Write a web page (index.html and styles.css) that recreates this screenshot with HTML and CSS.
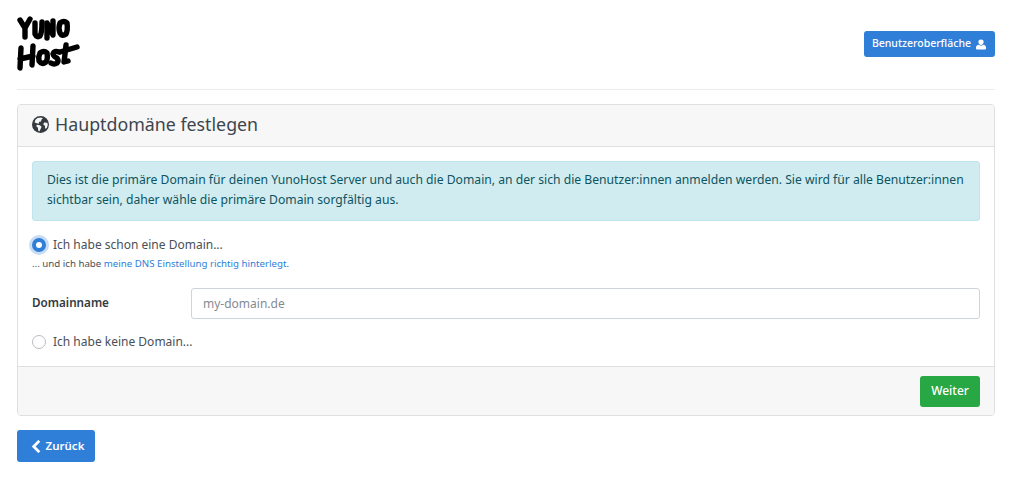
FILE: index.html
```html
<!DOCTYPE html>
<html lang="de">
<head>
<meta charset="utf-8">
<title>Hauptdomäne festlegen</title>
<link rel="stylesheet" href="styles.css">
</head>
<body>
<div class="page">
  <header class="top">
    <svg class="logo" viewBox="0 0 64 56" aria-label="YunoHost">
      <g fill="none" stroke="#000" stroke-width="5.400" stroke-linecap="round" stroke-linejoin="round">
        <path d="M3 5 L8 13 L13 4 M8 13 L8 22"/>
        <path d="M18 8 L18 19 Q20 23 23 21 Q25 18 25 7"/>
        <path d="M30 23 L30 8 L36 20 L36 6"/>
        <path d="M43 8 Q47 5 50 8 Q51 15 49 19 Q45 22 43 18 Q41 13 43 8 Z"/>
        <path d="M4 33 L3 53 M3 44 L16 41 M16 31 L15 50"/>
        <path d="M23 38 Q27 35 30 38 Q31 44 29 47 Q25 50 22 46 Q21 42 23 38 Z"/>
        <path d="M42 37 Q37 35 36 39 Q37 42 40 43 Q42 46 40 48 Q37 50 34 48"/>
        <path d="M43 37 L60 32 M49 30 Q48 40 47 47 L51 46"/>
      </g>
    </svg>
    <a class="btn btn-sm btn-primary" href="#">Benutzeroberfläche
      <svg class="ico-user" viewBox="0 0 12 12"><path d="M6 0a3.100 3.100 0 0 1 3.100 3.400c0 1.700-1.400 3.200-3.100 3.200S2.900 5.100 2.900 3.400A3.100 3.100 0 0 1 6 0zM3 6.400c1.700 1.300 4.300 1.300 6 0 1.800.2 3 1.600 3 3.300v1c0 .9-.7 1.300-1.400 1.300H1.400C.7 12 0 11.600 0 10.700v-1c0-1.700 1.200-3.100 3-3.300z"/></svg>
    </a>
  </header>

  <section class="card">
    <div class="card-head">
      <svg class="ico-globe" viewBox="0 0 16 16"><circle cx="8" cy="8" r="8" fill="#343a40"/><path fill="#f7f7f7" d="M5.200 1.800 8.400 1.400 10.300 2.400 8.700 3.500 8.600 5.100 6.800 5.400 6.300 7.300 3.700 6.500 2.400 5.800 3.300 3.500zM4.500 8.300 7.400 8.600 9 10.200 8 12.400 6.900 14.700 5.800 13.600 5.600 11 4 9.700zM11.300 6.100 14.400 6.300 14.900 8.500 13.900 11.300 12.200 12.100 12.300 9.500 10.600 8z"/></svg>
      <h2 class="card-title">Hauptdomäne festlegen</h2>
    </div>
    <div class="card-body">
      <div class="alert">Dies ist die primäre Domain für deinen YunoHost Server und auch die Domain, an der sich die Benutzer:innen anmelden werden. Sie wird für alle Benutzer:innen sichtbar sein, daher wähle die primäre Domain sorgfältig aus.</div>
      <label class="radio">
        <span class="dot dot-on"></span>
        <span>Ich habe schon eine Domain...</span>
      </label>
      <p class="hint">... und ich habe <a href="#">meine DNS Einstellung richtig hinterlegt</a>.</p>
      <div class="field">
        <label class="field-label" for="domain">Domainname</label>
        <input class="field-input" id="domain" type="text" placeholder="my-domain.de">
      </div>
      <label class="radio">
        <span class="dot"></span>
        <span>Ich habe keine Domain...</span>
      </label>
    </div>
    <div class="card-foot">
      <a class="btn btn-success" href="#">Weiter</a>
    </div>
  </section>

  <a class="btn btn-primary btn-back" href="#">
    <svg class="ico-chev" viewBox="0 0 10 14"><path d="M7.500 2 2.500 7l5 5" fill="none" stroke="#fff" stroke-width="3" stroke-linecap="square"/></svg>
    Zurück
  </a>
</div>
</body>
</html>
```
FILE: styles.css
```css
* { box-sizing: border-box; }
html, body { margin: 0; padding: 0; background: #fff; }
body {
  font-family: "Noto Sans", "Open Sans", sans-serif;
  font-size: 14px;
  line-height: 1.5;
  color: #343a40;
}
a { text-decoration: none; }
.page {
  width: 1024px;
  padding: 0 29px 0 17px;
  display: flex;
  flex-direction: column;
  align-items: stretch;
}
.top {
  height: 90px;
  border-bottom: 1px solid #ececec;
  display: flex;
  justify-content: space-between;
  align-items: flex-start;
  padding-top: 15px;
  margin-bottom: 14px;
}
.logo { width: 64px; height: 56px; display: block; }
.btn {
  display: inline-flex;
  align-items: center;
  justify-content: center;
  border-radius: 3px;
  color: #fff;
  font-weight: 500;
  white-space: nowrap;
}
.btn-primary { background: #2f7ed8; }
.btn-success { background: #28a745; }
.btn-sm {
  height: 26px;
  margin-top: 16px;
  padding: 0 9px 0 8px;
  font-size: 10.500px;
  gap: 5px;
}
.ico-user { width: 10px; height: 11px; fill: #fff; }
.card {
  border: 1px solid #dfdfdf;
  border-radius: 4px;
  display: flex;
  flex-direction: column;
  height: 312px;
}
.card-head {
  height: 42px;
  background: #f7f7f7;
  border-bottom: 1px solid #dfdfdf;
  display: flex;
  align-items: center;
  gap: 6px;
  padding: 0 0 2px 14px;
  border-radius: 3px 3px 0 0;
}
.ico-globe { width: 17px; height: 17px; }
.card-title {
  margin: 0;
  font-size: 17.800px;
  font-weight: 400;
  color: #3d464d;
}
.card-body {
  flex: 1;
  padding: 14px 14px 0;
}
.alert {
  height: 60px;
  background: #d1ecf1;
  border: 1px solid #bee5eb;
  border-radius: 3px;
  padding: 8px 14px;
  color: #0c5460;
  font-size: 12.170px;
  line-height: 19.500px;
  margin-bottom: 13px;
}
.radio {
  display: flex;
  align-items: center;
  gap: 7px;
  height: 21px;
  font-size: 12px;
  color: #495057;
}
.dot {
  width: 14px;
  height: 14px;
  border-radius: 50%;
  border: 1px solid #b8bdc2;
  background: #fff;
  flex: none;
}
.dot-on {
  border: 4px solid #2f7ed8;
  box-shadow: 0 0 0 3px #c8dcf4;
}
.hint {
  margin: 0 0 17px;
  padding-top: 2px;
  font-size: 9.700px;
  line-height: 14px;
  color: #495057;
}
.hint a { color: #2f7ed8; }
.field {
  display: flex;
  align-items: center;
  height: 31px;
  margin-bottom: 12px;
}
.field-label {
  width: 159px;
  flex: none;
  padding-bottom: 2px;
  font-size: 11.700px;
  font-weight: 600;
  color: #343a40;
}
.field-input {
  flex: 1;
  height: 31px;
  min-width: 0;
  border: 1px solid #ced4da;
  border-radius: 3px;
  padding: 0 11px;
  font: inherit;
  font-size: 12px;
  color: #495057;
  background: #fff;
}
.field-input::placeholder { color: #858b91; opacity: 1; }
.card-foot {
  height: 49px;
  background: #f7f7f7;
  border-top: 1px solid #dfdfdf;
  display: flex;
  align-items: center;
  justify-content: flex-end;
  padding: 0 14px;
  border-radius: 0 0 3px 3px;
}
.btn-success {
  width: 60px;
  height: 31px;
  font-size: 12px;
}
.btn-back {
  align-self: flex-start;
  width: 78px;
  height: 32px;
  margin-top: 14px;
  padding-left: 3px;
  font-size: 11.500px;
  font-weight: 600;
  gap: 5px;
}
.ico-chev { width: 10px; height: 13px; }
```
